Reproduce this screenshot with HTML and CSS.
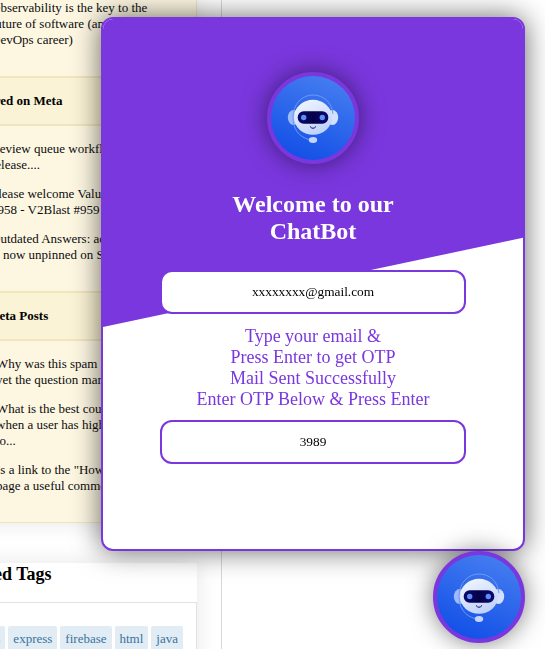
FILE: index.html
```html
<!DOCTYPE html>
<html lang="en">
<head>
<meta charset="utf-8">
<meta name="viewport" content="width=device-width, initial-scale=1">
<title>ChatBot</title>
<link rel="stylesheet" href="styles.css">
</head>
<body>
<svg class="defs" aria-hidden="true">
  <defs>
    <linearGradient id="disc" x1="0.7" y1="0" x2="0.3" y2="1">
      <stop offset="0" stop-color="#457df0"/>
      <stop offset="1" stop-color="#124fe6"/>
    </linearGradient>
    <linearGradient id="head" x1="0.2" y1="0" x2="0.7" y2="1">
      <stop offset="0" stop-color="#f0f5ff"/>
      <stop offset="1" stop-color="#bdd0fc"/>
    </linearGradient>
    <linearGradient id="visor" x1="0" y1="0" x2="1" y2="0">
      <stop offset="0" stop-color="#0b0b70"/>
      <stop offset="0.5" stop-color="#06004a"/>
      <stop offset="1" stop-color="#0b0b70"/>
    </linearGradient>
    <symbol id="robot" viewBox="0 0 84 84">
      <circle cx="42" cy="42" r="42" fill="url(#disc)"/>
      <ellipse cx="22.500" cy="41.500" rx="5.700" ry="7.500" fill="#9dbbfa"/>
      <ellipse cx="61.500" cy="41.500" rx="5.700" ry="7.500" fill="#d3e0fe"/>
      <path d="M62 38C61 27 53 19 42 19S22 28 22 41.500C22 53 28 61 38 63.500" fill="none" stroke="#7098f5" stroke-width="1"/>
      <ellipse cx="42" cy="41.300" rx="19" ry="17.500" fill="url(#head)"/>
      <rect x="26.700" y="35.200" width="30.600" height="12.500" rx="6" fill="url(#visor)"/>
      <circle cx="32.700" cy="41.500" r="2.700" fill="#5a8ff5"/>
      <circle cx="51.300" cy="41.500" r="2.700" fill="#5a8ff5"/>
      <path d="M39.200 50.700Q42 54.200 44.800 50.700" fill="none" stroke="#0b0b60" stroke-width="1" stroke-linecap="round"/>
      <ellipse cx="42" cy="64" rx="4.200" ry="3" fill="#c3d5fd"/>
    </symbol>
  </defs>
</svg>

<div class="page">
  <aside class="sidebar">
    <section class="notes">
      <ul class="links marked">
        <li>Observability is the key to the<br>future of software (and your<br>DevOps career)</li>
      </ul>
      <h3>Featured on Meta</h3>
      <ul class="links marked">
        <li>Review queue workflows<br>release....</li>
        <li>Please welcome Valued<br>#958 - V2Blast #959</li>
        <li>Outdated Answers: accepted<br>is now unpinned on Stack</li>
      </ul>
      <h3>Hot Meta Posts</h3>
      <ul class="links">
        <li>Why was this spam flagged<br>yet the question marked</li>
        <li>What is the best course<br>when a user has high<br>to...</li>
        <li>Is a link to the "How to"<br>page a useful comment?</li>
      </ul>
    </section>
    <section class="tags">
      <h2>Related Tags</h2>
      <ul class="tag-list">
        <li><a href="#">css</a></li>
        <li><a href="#">express</a></li>
        <li><a href="#">firebase</a></li>
        <li><a href="#">html</a></li>
        <li><a href="#">java</a></li>
      </ul>
    </section>
  </aside>
  <main class="content"></main>
</div>

<div class="chat" role="dialog" aria-labelledby="chat-title">
  <div class="avatar"><svg aria-hidden="true"><use href="#robot"/></svg></div>
  <h1 id="chat-title">Welcome to our<br>ChatBot</h1>
  <form class="login">
    <input type="email" aria-label="Email" value="xxxxxxxx@gmail.com">
    <p>Type your email &amp;<br>Press Enter to get OTP<br>Mail Sent Successfully<br>Enter OTP Below &amp; Press Enter</p>
    <input type="text" inputmode="numeric" aria-label="OTP" value="3989">
  </form>
</div>
<button class="avatar launcher" type="button" aria-label="Toggle chat"><svg aria-hidden="true"><use href="#robot"/></svg></button>
</body>
</html>
```
FILE: styles.css
```css
:root {
  --purple: #7a37de;
}

* {
  box-sizing: border-box;
}

body {
  margin: 0;
  overflow: hidden;
  background: #fff;
  color: #0c0d0e;
  font-family: "Liberation Serif", serif;
  font-size: 13px;
  line-height: 16px;
}

h1, h2, h3, p, ul {
  margin: 0;
  padding: 0;
}

h2, h3 {
  color: #000;
}

ul {
  list-style: none;
}

.defs {
  position: absolute;
  width: 0;
  height: 0;
}

.page {
  display: flex;
  height: 100vh;
}

.sidebar {
  flex: none;
  width: 250px;
  margin-left: -53px;
}

.content {
  flex: 1;
  margin-left: 24px;
  border-left: 1px solid #d6d9dc;
}

.notes {
  margin-bottom: 40px;
  border: solid #f1e5bc;
  border-width: 0 1px 1px;
  background: #fdf7e2;
  box-shadow: 0 0 20px rgba(0, 0, 0, 0.1);
}

.notes h3 {
  padding: 15px;
  border: solid #f1e5bc;
  border-width: 2px 0;
  background: #fbf3d5;
  font-size: 13px;
}

.links {
  padding: 15px 0 15px 48px;
}

.marked {
  padding-left: 43px;
}

.marked:first-child {
  padding-top: 0;
}

.links li {
  margin-bottom: 13px;
}

.tags {
  background: #fff;
  box-shadow: 0 0 20px rgba(0, 0, 0, 0.1);
}

.tags h2 {
  padding: 1px 6px 17px;
  font-size: 18px;
  line-height: 21px;
}

.tag-list {
  display: flex;
  justify-content: flex-end;
  gap: 3px;
  padding: 23px 13px;
  border: 1px solid #e0e2e5;
}

.tag-list a {
  display: block;
  padding: 5px 5px 4px;
  border-radius: 2px;
  background: #e1ecf4;
  color: #39739d;
  text-decoration: none;
}

.chat {
  position: fixed;
  right: 20px;
  bottom: 98px;
  z-index: 1;
  display: flex;
  flex-direction: column;
  align-items: center;
  width: min(424px, calc(100vw - 40px));
  padding: 53px 57px 85px;
  border: 2px solid var(--purple);
  border-radius: 12px;
  background: #fff;
  box-shadow: 0 0 28px rgba(0, 0, 0, 0.6);
  text-align: center;
}

.chat::before {
  content: "";
  position: absolute;
  inset: 0 0 auto;
  z-index: -1;
  height: 308px;
  border-radius: 10px 10px 0 0;
  background: var(--purple);
  clip-path: polygon(0 0, 100% 0, 100% 71%, 0 100%);
}

.avatar {
  width: 92px;
  height: 92px;
  padding: 0;
  border: 4px solid var(--purple);
  border-radius: 50%;
  background: var(--purple);
  box-shadow: 0 0 24px rgba(0, 0, 0, 0.5);
}

.avatar svg {
  display: block;
  width: 100%;
  height: 100%;
}

.launcher {
  position: fixed;
  right: 20px;
  bottom: 6px;
  z-index: 2;
  cursor: pointer;
}

.chat h1 {
  margin: 27px 0 25px;
  color: #fff;
  font-size: 24px;
  line-height: 27px;
}

.login {
  width: 100%;
}

.login input {
  display: block;
  width: 100%;
  height: 44px;
  border: 2px solid var(--purple);
  border-radius: 12px;
  background: #fff;
  color: #000;
  font-family: inherit;
  text-align: center;
}

.login p {
  margin: 12px 0 10px;
  color: var(--purple);
  font-size: 18px;
  line-height: 21px;
}
```
